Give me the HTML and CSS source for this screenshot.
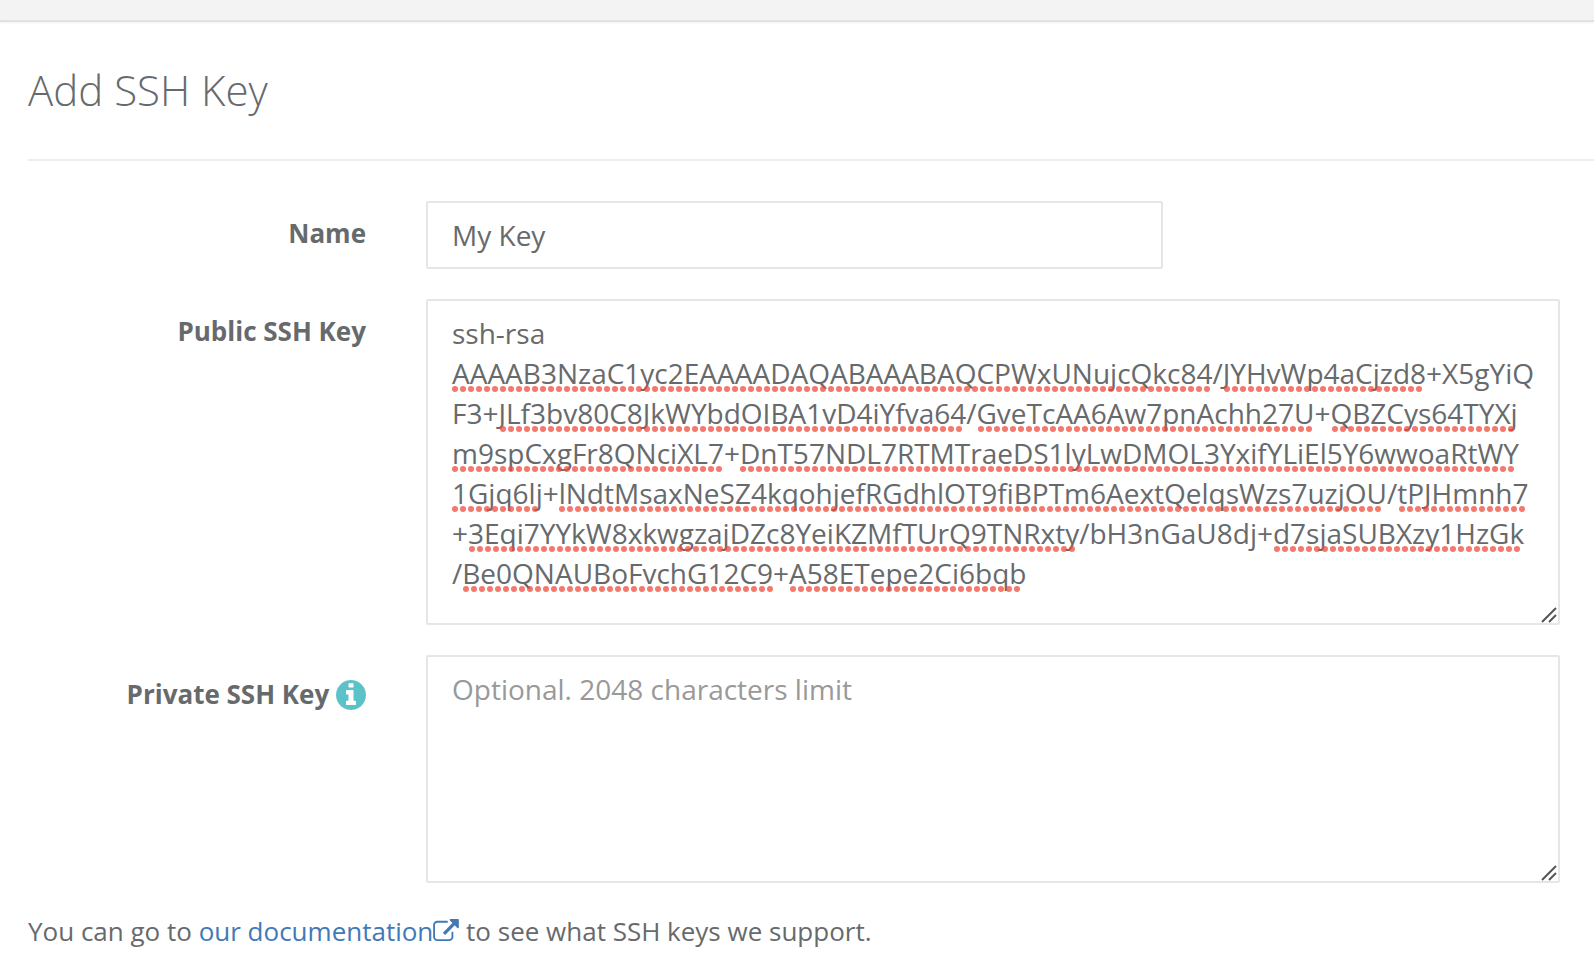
FILE: index.html
```
<!DOCTYPE html>
<html lang="en">
<head>
    <meta charset="UTF-8">
    <meta name="viewport" content="width=device-width, initial-scale=1.0">
    <title>Add SSH Key</title>
    <link rel="stylesheet" href="styles.css">
</head>
<body>
    <header class="topbar"></header>

    <main class="page">
        <h1 class="page-title">Add SSH Key</h1>

        <form class="key-form">
            <label class="form-label" for="key-name">Name</label>
            <div class="form-field">
                <input type="text" id="key-name" class="form-control name-input" value="My Key">
            </div>

            <label class="form-label" for="public-key">Public SSH Key</label>
            <div class="form-field">
                <textarea id="public-key" class="form-control public-key" spellcheck="false">ssh-rsa
AAAAB3NzaC1yc2EAAAADAQABAAABAQCPWxUNujcQkc84/JYHvWp4aCjzd8+X5gYiQ
F3+JLf3bv80C8JkWYbdOIBA1vD4iYfva64/GveTcAA6Aw7pnAchh27U+QBZCys64TYXj
m9spCxgFr8QNciXL7+DnT57NDL7RTMTraeDS1lyLwDMOL3YxifYLiEl5Y6wwoaRtWY
1Gjq6lj+lNdtMsaxNeSZ4kqohjefRGdhlOT9fiBPTm6AextQelqsWzs7uzjOU/tPJHmnh7
+3Eqi7YYkW8xkwgzajDZc8YeiKZMfTUrQ9TNRxty/bH3nGaU8dj+d7sjaSUBXzy1HzGk
/Be0QNAUBoFvchG12C9+A58ETepe2Ci6bqb</textarea>
                <!-- spelling marks, one line per marked word -->
                <svg class="spell-marks" width="1134" height="326" aria-hidden="true">
                    <path d="M29 90H785M801 90H994"/>
                    <path d="M77 130H538M555 130H885M909 130H1087"/>
                    <path d="M29 170H295M317 170H1088"/>
                    <path d="M29 210H112M136 210H954M976 210H1098"/>
                    <path d="M46 250H647M851 250H1093"/>
                    <path d="M40 290H346M367 290H592"/>
                </svg>
                <svg class="grip" viewBox="0 0 16 16" aria-hidden="true"><path d="M1 15L15 1M8 15L15 8"/></svg>
            </div>

            <label class="form-label has-help" for="private-key">Private SSH Key
                <svg class="info-icon" viewBox="128 128 1536 1536" aria-hidden="true"><path d="M1152 1376v-160q0-14-9-23t-23-9h-96v-512q0-14-9-23t-23-9h-320q-14 0-23 9t-9 23v160q0 14 9 23t23 9h96v320h-96q-14 0-23 9t-9 23v160q0 14 9 23t23 9h448q14 0 23-9t9-23zm-128-896v-160q0-14-9-23t-23-9h-192q-14 0-23 9t-9 23v160q0 14 9 23t23 9h192q14 0 23-9t9-23zm640 416q0 209-103 385.5t-279.5 279.5-385.5 103-385.5-103-279.5-279.5-103-385.5 103-385.5 279.5-279.5 385.5-103 385.5 103 279.5 279.5 103 385.5z"/></svg>
            </label>
            <div class="form-field">
                <textarea id="private-key" class="form-control private-key" placeholder="Optional. 2048 characters limit"></textarea>
                <svg class="grip" viewBox="0 0 16 16" aria-hidden="true"><path d="M1 15L15 1M8 15L15 8"/></svg>
            </div>
        </form>

        <p class="help-text">You can go to <a href="#">our documentation<svg class="link-icon" viewBox="0 0 1792 1536" aria-hidden="true"><path d="M1408 928v320q0 119-84.5 203.5t-203.5 84.5h-832q-119 0-203.5-84.5t-84.5-203.5v-832q0-119 84.5-203.5t203.5-84.5h704q14 0 23 9t9 23v64q0 14-9 23t-23 9h-704q-66 0-113 47t-47 113v832q0 66 47 113t113 47h832q66 0 113-47t47-113v-320q0-14 9-23t23-9h64q14 0 23 9t9 23zm384-864v512q0 26-19 45t-45 19-45-19l-176-176-652 652q-10 10-23 10t-23-10l-114-114q-10-10-10-23t10-23l652-652-176-176q-19-19-19-45t19-45 45-19h512q26 0 45 19t19 45z"/></svg></a> to see what SSH keys we support.</p>
    </main>
</body>
</html>
```

FILE: styles.css
```
* {
    margin: 0;
    padding: 0;
    box-sizing: border-box;
    font-family: "Open Sans", Arial, sans-serif;
}

body {
    background: #fff;
    color: #676a6c;
    font-size: 26px;
    line-height: 36px;
}

.topbar {
    height: 22px;
    background: #f3f3f3;
    border-bottom: 2px solid #e1e1e1;
    box-shadow: 0 1px 2px rgba(0, 0, 0, 0.06);
}

.page {
    padding-left: 28px;
}

.page-title {
    padding: 38px 0 39px;
    border-bottom: 2px solid #eee;
    font-size: 42px;
    font-weight: 300;
    line-height: 60px;
}

.key-form {
    display: grid;
    grid-template-columns: 338px 1fr;
    column-gap: 60px;
    row-gap: 30px;
    padding: 40px 34px 0 0;
}

.form-label {
    padding-top: 14px;
    font-weight: bold;
    text-align: right;
}

.has-help {
    line-height: 50px;
}

.form-field {
    position: relative;
}

.form-control {
    display: block;
    width: 100%;
    padding: 12px 24px;
    border: 2px solid #e5e6e7;
    border-radius: 2px;
    background: #fff;
    color: inherit;
    font-size: 28px;
    line-height: 40px;
    resize: none;
    outline: none;
}

.form-control::placeholder {
    color: #999;
}

.name-input {
    width: 65%;
    height: 68px;
}

.public-key {
    height: 326px;
    overflow: hidden;
}

.private-key {
    height: 228px;
}

.spell-marks {
    position: absolute;
    top: 0;
    left: 0;
    pointer-events: none;
    fill: none;
    stroke: rgba(238, 76, 60, 0.75);
    stroke-width: 6;
    stroke-linecap: round;
    stroke-dasharray: 0 8;
}

.grip {
    position: absolute;
    right: 3px;
    bottom: 2px;
    width: 16px;
    height: 16px;
    pointer-events: none;
    fill: none;
    stroke: #555;
    stroke-width: 2;
}

.info-icon {
    width: 30px;
    height: 30px;
    vertical-align: -6px;
    fill: #5bc2c7;
}

.help-text {
    padding: 30px 0;
}

.help-text a {
    color: #4179b8;
    text-decoration: none;
}

.link-icon {
    width: 26px;
    height: 22px;
    fill: currentColor;
}
```
